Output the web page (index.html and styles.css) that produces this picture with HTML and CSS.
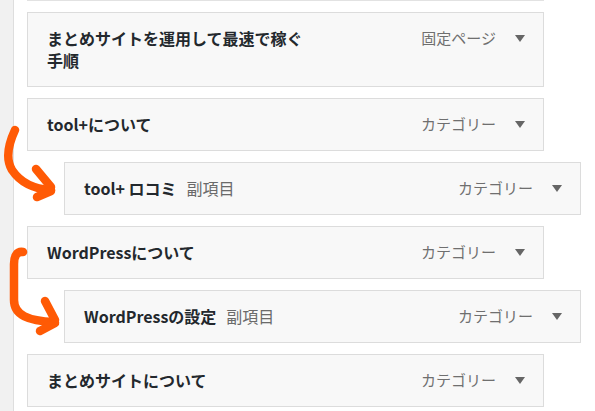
FILE: index.html
```html
<!DOCTYPE html>
<html lang="ja">
<head>
    <meta charset="UTF-8" />
    <title>メニュー構造</title>
    <link rel="stylesheet" href="styles.css">
</head>
<body>
    <div class="sidebar"></div>

    <div class="menu">
        <div class="item-tail"></div>

        <div class="item tall">
            <span class="item-title">まとめサイトを運用して最速で稼ぐ手順</span>
            <span class="item-controls">
                <span class="item-type">固定ページ</span>
                <span class="item-edit"></span>
            </span>
        </div>

        <div class="item">
            <span class="item-title">tool+について</span>
            <span class="item-controls">
                <span class="item-type">カテゴリー</span>
                <span class="item-edit"></span>
            </span>
        </div>

        <div class="item sub">
            <span class="item-title">tool+ ロコミ<span class="is-sub">副項目</span></span>
            <span class="item-controls">
                <span class="item-type">カテゴリー</span>
                <span class="item-edit"></span>
            </span>
        </div>

        <div class="item">
            <span class="item-title">WordPressについて</span>
            <span class="item-controls">
                <span class="item-type">カテゴリー</span>
                <span class="item-edit"></span>
            </span>
        </div>

        <div class="item sub">
            <span class="item-title">WordPressの設定<span class="is-sub">副項目</span></span>
            <span class="item-controls">
                <span class="item-type">カテゴリー</span>
                <span class="item-edit"></span>
            </span>
        </div>

        <div class="item">
            <span class="item-title">まとめサイトについて</span>
            <span class="item-controls">
                <span class="item-type">カテゴリー</span>
                <span class="item-edit"></span>
            </span>
        </div>
    </div>

    <!-- hand drawn arrows pointing at the sub items -->
    <svg class="marks" width="595" height="411" viewBox="0 0 595 411">
        <g fill="none" stroke="#ff5a05" stroke-width="8.5" stroke-linecap="round" stroke-linejoin="round">
            <path d="M15 130 C 8 145, 6 160, 12 170 C 20 182, 34 189, 51 190" />
            <path d="M36 169 L 51 187" />
            <path d="M51 191 L 37 197" />
            <path d="M23 252 C 17 251, 14 256, 14 264 L 14 300 C 14 315, 28 321, 54 322" />
            <path d="M45 301 L 55 320" />
            <path d="M55 323 L 40 331" />
        </g>
    </svg>
</body>
</html>
```

FILE: styles.css
```css
html, body {
    height: 100%;
}

body {
    margin: 0;
    display: flex;
    background: #fff;
    font-family: "Noto Sans CJK JP", "Noto Sans", sans-serif;
    color: #23282d;
    overflow: hidden;
}

.sidebar {
    width: 13px;
    flex-shrink: 0;
    background: #f1f1f1;
    border-right: 1px solid #dedede;
}

.menu {
    padding-left: 13px;
}

/* bottom edge of the item above, cut off by the top of the window */
.item-tail {
    width: 517px;
    height: 0;
    border-bottom: 1px solid #e2e2e2;
    margin-bottom: 11px;
}

.item {
    display: flex;
    justify-content: space-between;
    align-items: flex-start;
    width: 517px;
    box-sizing: border-box;
    padding: 14px 18px 15px 19px;
    margin-bottom: 11px;
    background: #f8f8f8;
    border: 1px solid #dcdcdc;
    line-height: 22px;
}

.item.sub {
    margin-left: 37px;
}

.item-title {
    max-width: 262px;
    font-size: 16px;
    font-weight: 700;
}

.is-sub {
    margin-left: 10px;
    font-weight: 400;
    font-size: 16px;
    color: #6a6a6a;
}

.item-controls {
    display: flex;
    align-items: center;
    height: 22px;
}

.item-type {
    font-size: 15px;
    color: #6f6f6f;
}

.item-edit {
    width: 0;
    height: 0;
    margin-left: 19px;
    border-left: 5px solid transparent;
    border-right: 5px solid transparent;
    border-top: 7px solid #666;
}

.marks {
    position: absolute;
    top: 0;
    left: 0;
    pointer-events: none;
}
```
